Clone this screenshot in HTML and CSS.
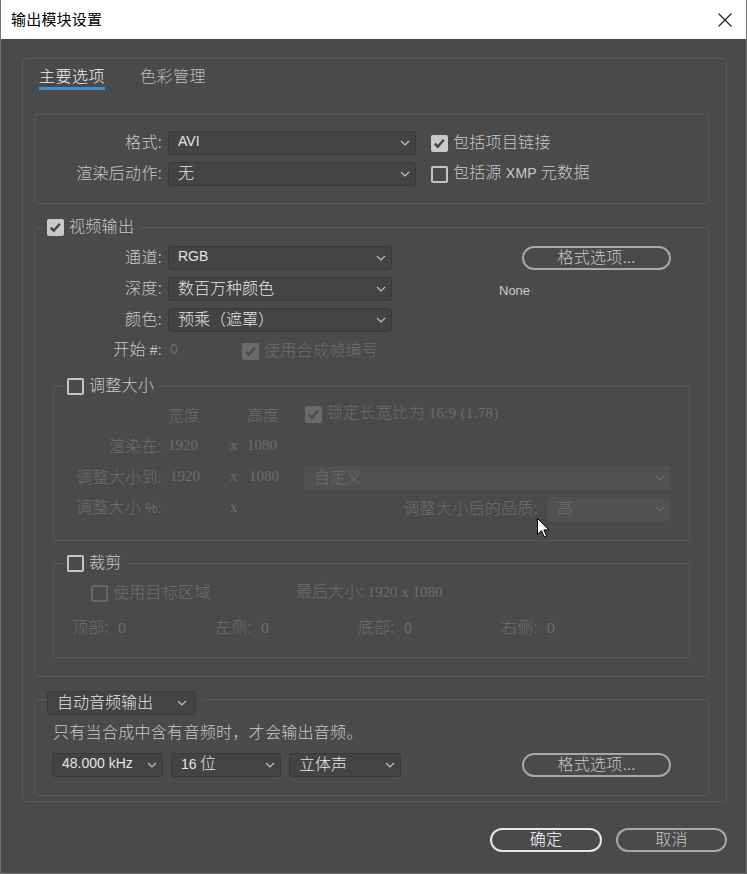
FILE: index.html
```html
<!DOCTYPE html>
<html lang="zh-CN">
<head>
	<meta charset="UTF-8">
	<title>输出模块设置</title>
	<link rel="stylesheet" href="styles.css">
</head>
<body>
<div class="win">
	<div class="titlebar">
		<span class="title">输出模块设置</span>
		<svg class="close" width="14" height="14" viewBox="0 0 14 14"><path d="M.5.5l13 13M13.5.5l-13 13" stroke="#1a1a1a" stroke-width="1.1" fill="none"/></svg>
	</div>
	<div class="client">
		<div class="panel">
			<div class="tabs">
				<span class="tab act">主要选项</span>
				<span class="tab">色彩管理</span>
			</div>

			<!-- 格式 -->
			<div class="box fmt">
				<div class="row">
					<span class="lbl">格式:</span>
					<div class="sel s248"><span class="lt">AVI</span><svg class="chev" width="10" height="6" viewBox="0 0 10 6"><path d="M1 1l4 4 4-4" fill="none" stroke="currentColor" stroke-width="1.2"/></svg></div>
					<span class="cb on gap15"><svg width="17" height="17" viewBox="0 0 17 17"><path d="M3.8 8.6l3 3.1 6-7" fill="none" stroke="#444" stroke-width="2.4"/></svg></span>
					<span class="cbt">包括项目链接</span>
				</div>
				<div class="row">
					<span class="lbl">渲染后动作:</span>
					<div class="sel s248"><span>无</span><svg class="chev" width="10" height="6" viewBox="0 0 10 6"><path d="M1 1l4 4 4-4" fill="none" stroke="currentColor" stroke-width="1.2"/></svg></div>
					<span class="cb gap15"></span>
					<span class="cbt">包括源 <span class="lt">XMP</span> 元数据</span>
				</div>
			</div>

			<!-- 视频输出 -->
			<fieldset class="grp video">
				<legend><span class="cb on"><svg width="17" height="17" viewBox="0 0 17 17"><path d="M3.8 8.6l3 3.1 6-7" fill="none" stroke="#444" stroke-width="2.4"/></svg></span><span class="cbt">视频输出</span></legend>
				<div class="vtop">
					<div class="vrows">
						<div class="row">
							<span class="lbl">通道:</span>
							<div class="sel s224"><span class="lt">RGB</span><svg class="chev" width="10" height="6" viewBox="0 0 10 6"><path d="M1 1l4 4 4-4" fill="none" stroke="currentColor" stroke-width="1.2"/></svg></div>
						</div>
						<div class="row">
							<span class="lbl">深度:</span>
							<div class="sel s224"><span>数百万种颜色</span><svg class="chev" width="10" height="6" viewBox="0 0 10 6"><path d="M1 1l4 4 4-4" fill="none" stroke="currentColor" stroke-width="1.2"/></svg></div>
						</div>
						<div class="row">
							<span class="lbl">颜色:</span>
							<div class="sel s224"><span>预乘（遮罩）</span><svg class="chev" width="10" height="6" viewBox="0 0 10 6"><path d="M1 1l4 4 4-4" fill="none" stroke="currentColor" stroke-width="1.2"/></svg></div>
						</div>
						<div class="row">
							<span class="lbl">开始 <span class="lt">#:</span></span>
							<span class="val dim lt">0</span>
							<span class="cb on dim"><svg width="17" height="17" viewBox="0 0 17 17"><path d="M3.8 8.6l3 3.1 6-7" fill="none" stroke="#4c4c4c" stroke-width="2.4"/></svg></span>
							<span class="cbt dim">使用合成帧编号</span>
						</div>
					</div>
					<div class="vside">
						<button class="pill wide">格式选项...</button>
						<div class="none">None</div>
					</div>
				</div>

				<!-- 调整大小 -->
				<fieldset class="grp sub resize">
					<legend><span class="cb"></span><span class="cbt">调整大小</span></legend>
					<div class="rgrid dim">
						<span></span>
						<span>宽度</span>
						<span></span>
						<span>高度</span>
						<span class="lock"><span class="cb on dim"><svg width="17" height="17" viewBox="0 0 17 17"><path d="M3.8 8.6l3 3.1 6-7" fill="none" stroke="#4c4c4c" stroke-width="2.4"/></svg></span><span class="cbt">锁定长宽比为 <span class="num">16:9 (1.78)</span></span></span>

						<span class="rl">渲染在:</span>
						<span class="num">1920</span>
						<span class="num">x</span>
						<span class="num">1080</span>
						<span></span>

						<span class="rl">调整大小到:</span>
						<span class="num nudge">1920</span>
						<span class="num">x</span>
						<span class="num nudge">1080</span>
						<div class="sel off"><span>自定义</span><svg class="chev" width="10" height="6" viewBox="0 0 10 6"><path d="M1 1l4 4 4-4" fill="none" stroke="currentColor" stroke-width="1.2"/></svg></div>

						<span class="rl">调整大小 <span class="lt">%:</span></span>
						<span></span>
						<span class="num">x</span>
						<div class="quality">
							<span>调整大小后的品质:</span>
							<div class="sel off q"><span>高</span><svg class="chev" width="10" height="6" viewBox="0 0 10 6"><path d="M1 1l4 4 4-4" fill="none" stroke="currentColor" stroke-width="1.2"/></svg></div>
						</div>
					</div>
				</fieldset>

				<!-- 裁剪 -->
				<fieldset class="grp sub crop">
					<legend><span class="cb"></span><span class="cbt">裁剪</span></legend>
					<div class="crow1 dim">
						<span class="use"><span class="cb dim"></span><span class="cbt">使用目标区域</span></span>
						<span>最后大小: <span class="num">1920 x 1080</span></span>
					</div>
					<div class="crow2 dim">
						<span>顶部:<span class="v lt">0</span></span>
						<span>左侧:<span class="v lt">0</span></span>
						<span>底部:<span class="v lt">0</span></span>
						<span>右侧:<span class="v lt">0</span></span>
					</div>
				</fieldset>
			</fieldset>

			<!-- 音频 -->
			<fieldset class="grp audio">
				<legend><div class="sel asel"><span>自动音频输出</span><svg class="chev" width="10" height="6" viewBox="0 0 10 6"><path d="M1 1l4 4 4-4" fill="none" stroke="currentColor" stroke-width="1.2"/></svg></div></legend>
				<div class="atext">只有当合成中含有音频时，才会输出音频。</div>
				<div class="arow">
					<div class="sel a1"><span class="lt">48.000 kHz</span><svg class="chev" width="10" height="6" viewBox="0 0 10 6"><path d="M1 1l4 4 4-4" fill="none" stroke="currentColor" stroke-width="1.2"/></svg></div>
					<div class="sel a2"><span><span class="lt">16</span> 位</span><svg class="chev" width="10" height="6" viewBox="0 0 10 6"><path d="M1 1l4 4 4-4" fill="none" stroke="currentColor" stroke-width="1.2"/></svg></div>
					<div class="sel a3"><span>立体声</span><svg class="chev" width="10" height="6" viewBox="0 0 10 6"><path d="M1 1l4 4 4-4" fill="none" stroke="currentColor" stroke-width="1.2"/></svg></div>
					<button class="pill wide">格式选项...</button>
				</div>
			</fieldset>
		</div>
		<div class="actions">
			<button class="pill ok">确定</button>
			<button class="pill cancel">取消</button>
		</div>
	</div>
	<svg class="cursor" width="14" height="21" viewBox="0 0 14 21"><path d="M.5.5v16l4-3.8 2.8 6.3 2.3-1-2.7-6.1h5.1z" fill="#fff" stroke="#000" stroke-width="1"/></svg>
</div>
</body>
</html>
```

FILE: styles.css
```css
* {
	box-sizing: border-box;
}
html, body {
	margin: 0;
	padding: 0;
}
body {
	background: #4a4a4a;
	font-family: "Noto Sans CJK SC", "Liberation Sans", sans-serif;
	font-weight: 300;
	font-size: 16px;
	line-height: 22px;
	color: #c8c8c8;
}
.win {
	position: relative;
	width: 747px;
	height: 874px;
	border: 1px solid #707070;
	border-top: 0;
	background: #4a4a4a;
	overflow: hidden;
}
.titlebar {
	height: 39px;
	background: #fff;
	display: flex;
	align-items: center;
	justify-content: space-between;
	padding: 0 14px 0 10px;
}
.title {
	font-size: 15px;
	font-weight: 400;
	color: #000;
	letter-spacing: .2px;
	padding-bottom: 2px;
}
.close {
	display: block;
}
.client {
	padding: 19px 0 0 21px;
}
.panel {
	width: 705px;
	border: 1px solid #5a5a5a;
	border-radius: 4px;
	padding: 0 0 5px 11px;
}

/* tabs */
.tabs {
	display: flex;
	gap: 35px;
	margin-top: 5px;
	padding-left: 5px;
}
.tab {
	font-size: 16px;
	line-height: 22px;
	letter-spacing: .5px;
	color: #bcbcbc;
	padding-bottom: 1px;
	border-bottom: 3px solid transparent;
}
.tab.act {
	color: #eee;
	border-bottom-color: #3c8fd9;
}

/* common */
.lt {
	font-family: "Liberation Sans", sans-serif;
	font-weight: 400;
	font-size: 14px;
}
.num {
	font-family: "Liberation Serif", serif;
	font-weight: 400;
	font-size: 15px;
}
.dim {
	color: #6d6d6d;
}
.box {
	width: 675px;
	border: 1px solid #585858;
	border-radius: 3px;
}
.fmt {
	margin-top: 24px;
	padding: 16px 0 17px;
}
.row {
	display: flex;
	align-items: center;
	height: 24px;
}
.row + .row {
	margin-top: 7px;
}
/* CJK glyphs sit low in the line box: lift centred text a little */
.row > span,
.sel > span,
legend .cbt,
.rgrid > span,
.quality > span,
.crow1 > span,
.crow2 > span {
	padding-bottom: 4px;
}
.use .cbt {
	padding-bottom: 4px;
}
.lbl {
	flex: none;
	width: 133px;
	text-align: right;
	padding-right: 6px;
	white-space: nowrap;
	letter-spacing: .3px;
}
.sel {
	flex: none;
	height: 24px;
	display: flex;
	align-items: center;
	justify-content: space-between;
	background: #434343;
	border: 1px solid #393939;
	border-radius: 3px;
	padding: 0 5px 0 9px;
	color: #e4e4e4;
	white-space: nowrap;
}
.chev {
	display: block;
	color: #c0c0c0;
}
.s248 {
	width: 248px;
}
.s224 {
	width: 224px;
}
.sel.off {
	background: #515151;
	border-color: #515151;
	color: #6d6d6d;
}
.sel.off .chev {
	color: #6a6a6a;
}

/* checkbox */
.cb {
	flex: none;
	display: inline-block;
	width: 17px;
	height: 17px;
	border: 2px solid #c4c4c4;
	border-radius: 2px;
	padding: 0 !important;
}
.cb.on {
	border: 0;
	background: #c9c9c9;
}
.cb svg {
	display: block;
}
.cb.dim {
	border-color: #666;
}
.cb.on.dim {
	background: #6a6a6a;
}
.gap15 {
	margin-left: 15px;
}
.cbt {
	margin-left: 5px;
	white-space: nowrap;
	letter-spacing: .3px;
}

/* fieldsets */
fieldset.grp {
	margin: 0;
	padding: 0;
	border: 1px solid #585858;
	border-radius: 3px;
	min-width: 0;
}
fieldset.grp > legend {
	display: flex;
	align-items: center;
	height: 22px;
	padding: 0 6px 0 2px;
}
.video {
	width: 675px;
	margin-top: 12px !important;
	padding-bottom: 18px !important;
}
.video > legend {
	margin-left: 10px;
}
.vtop {
	display: flex;
	margin-top: 8px;
}
.vrows {
	width: 357px;
	flex: none;
}
.val {
	flex: none;
	width: 74px;
	padding-left: 2px;
}
.vside {
	margin-left: 107px;
}
.vside .pill {
	margin-left: 23px;
}
.none {
	margin-top: 12px;
	font-family: "Liberation Sans", sans-serif;
	font-weight: 400;
	font-size: 13px;
	line-height: 18px;
	color: #c6cdd4;
}

/* buttons */
.pill {
	display: block;
	height: 24px;
	border: 2px solid #a8a8a8;
	border-radius: 12px;
	background: transparent;
	color: #c8c8c8;
	font-family: inherit;
	font-weight: 300;
	font-size: 16px;
	line-height: 16px;
	padding: 0 0 4px;
	letter-spacing: .3px;
}
.pill.wide {
	width: 149px;
}
.pill.ok {
	width: 112px;
	border-color: #e6e6e6;
	color: #fff;
}
.pill.cancel {
	width: 111px;
}

/* 调整大小 */
.sub {
	margin: 12px 18px 0 !important;
}
.sub > legend {
	margin-left: 11px;
}
.resize {
	padding-bottom: 19px !important;
}
.rgrid {
	display: grid;
	grid-template-columns: 114px 62px 17px 57px 367px;
	grid-auto-rows: 24px;
	row-gap: 7px;
	align-items: center;
	margin-top: 7px;
	white-space: nowrap;
}
.rl {
	text-align: right;
	padding-right: 6px;
	letter-spacing: .3px;
}
.nudge {
	padding-left: 2px;
}
.lock {
	display: flex;
	align-items: center;
	padding-left: 1px;
}
.lock .cbt {
	padding-bottom: 4px;
}
.quality {
	grid-column: 4 / 6;
	display: flex;
	align-items: center;
	justify-content: flex-end;
	letter-spacing: .3px;
}
.sel.q {
	width: 124px;
	margin-left: 9px;
}

/* 裁剪 */
.crop {
	margin-top: 11px !important;
	padding-bottom: 18px !important;
}
.crow1 {
	display: flex;
	align-items: center;
	height: 24px;
	margin-top: 7px;
	white-space: nowrap;
}
.use {
	display: flex;
	align-items: center;
	width: 242px;
	padding-left: 37px;
	padding-bottom: 0 !important;
}
.crow2 {
	display: grid;
	grid-template-columns: repeat(4, 143px);
	align-items: center;
	height: 24px;
	margin-top: 10px;
	padding-left: 18px;
	letter-spacing: .3px;
}
.crow2 .v {
	margin-left: 9px;
}

/* 音频 */
.audio {
	width: 675px;
	margin-top: 6px !important;
	padding-bottom: 18px !important;
}
fieldset.audio > legend {
	height: auto;
	margin-left: 12px;
	padding: 8px 7px 0 0;
}
.asel {
	width: 149px;
	padding-right: 8px;
}
.atext {
	margin-top: 5px;
	padding-bottom: 2px;
	padding-left: 18px;
	letter-spacing: .3px;
}
.arow {
	display: flex;
	align-items: center;
	gap: 8px;
	margin-top: 9px;
	padding-left: 17px;
}
.a1 {
	width: 111px;
}
.a2 {
	width: 110px;
}
.a3 {
	width: 112px;
}
.arow .pill {
	margin-left: 113px;
}

.actions {
	width: 705px;
	display: flex;
	justify-content: flex-end;
	gap: 14px;
	margin-top: 26px;
}
.cursor {
	position: absolute;
	left: 536px;
	top: 518px;
}
```
